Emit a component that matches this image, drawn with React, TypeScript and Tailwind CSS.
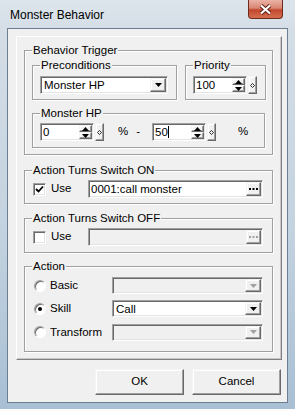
import type { ReactNode } from 'react';

const sunken =
  'border border-t-[#a0a0a0] border-l-[#a0a0a0] border-b-white border-r-white shadow-[inset_1px_1px_0_#696969,inset_-1px_-1px_0_#e3e3e3]';
const raised =
  'border border-t-[#f4f4f4] border-l-[#f4f4f4] border-b-[#696969] border-r-[#696969] shadow-[inset_-1px_-1px_0_#a0a0a0,inset_1px_1px_0_#ffffff] bg-[#f0f0f0]';

const Group = ({ label, className, children }: { label: string; className: string; children: ReactNode }) => (
  <fieldset className={`border border-[#a0a0a0] shadow-[inset_1px_1px_0_#fff,1px_1px_0_#fff] pl-[7px] ${className}`}>
    <legend className="px-[1px] bg-[#f0f0f0] leading-[14px]">{label}</legend>
    {children}
  </fieldset>
);

const Arrow = ({ up, color = '#000' }: { up?: boolean; color?: string }) => (
  <svg width="7" height="4" viewBox="0 0 7 4">
    <polygon points={up ? '0,4 7,4 3.5,0' : '0,0 7,0 3.5,4'} fill={color} />
  </svg>
);

const Combo = ({ value, className, disabled }: { value?: string; className: string; disabled?: boolean }) => (
  <div className={`flex ${sunken} ${disabled ? 'bg-[#f0f0f0]' : 'bg-white'} ${className}`}>
    <span className="flex-1 pl-[3px] leading-[14px] self-center">{value}</span>
    <div className={`w-[16px] m-[1px] flex items-center justify-center ${raised}`}>
      <Arrow color={disabled ? '#a0a0a0' : '#000'} />
    </div>
  </div>
);

const Spin = ({ value, caret }: { value: string; caret?: boolean }) => (
  <div className="flex h-[18px] w-[64px]">
    <div className={`flex-1 flex bg-white ${sunken}`}>
      <div className="flex-1 flex items-center pl-[2px] leading-[14px]">
        {value}
        {caret && <span className="w-px h-[12px] bg-black" />}
      </div>
      <div className="w-[13px] my-[1px] mr-[1px] flex flex-col">
        <div className={`flex-1 flex items-center justify-center ${raised}`}>
          <Arrow up />
        </div>
        <div className={`flex-1 flex items-center justify-center ${raised}`}>
          <Arrow />
        </div>
      </div>
    </div>
    <div className={`w-[9px] ml-[1px] flex items-center justify-center ${raised}`}>
      <svg width="5" height="5" viewBox="0 0 5 5">
        <polygon points="2.5,0.5 4.5,2.5 2.5,4.5 0.5,2.5" fill="none" stroke="#000" strokeWidth="0.8" />
      </svg>
    </div>
  </div>
);

const Check = ({ checked }: { checked?: boolean }) => (
  <div className={`w-[13px] h-[13px] bg-white flex items-center justify-center ${sunken}`}>
    {checked && (
      <svg width="9" height="9" viewBox="0 0 9 9">
        <path d="M1 4 L3.5 6.5 L8 1.5" fill="none" stroke="#000" strokeWidth="1.8" />
      </svg>
    )}
  </div>
);

const Radio = ({ checked }: { checked?: boolean }) => (
  <div className="w-[12px] h-[12px] rounded-full bg-white flex items-center justify-center border border-t-[#a0a0a0] border-l-[#a0a0a0] border-b-white border-r-white shadow-[inset_1px_1px_0_#696969]">
    {checked && <div className="w-[4px] h-[4px] rounded-full bg-black" />}
  </div>
);

const Dots = ({ color }: { color: string }) => (
  <svg width="9" height="3" viewBox="0 0 9 3">
    <rect x="0" y="0" width="2" height="2" fill={color} />
    <rect x="3.5" y="0" width="2" height="2" fill={color} />
    <rect x="7" y="0" width="2" height="2" fill={color} />
  </svg>
);

const PathField = ({ value, disabled }: { value?: string; disabled?: boolean }) => (
  <div className={`w-[175px] h-[18px] flex ${sunken} ${disabled ? 'bg-[#f0f0f0]' : 'bg-white'}`}>
    <span className="flex-1 pl-[2px] leading-[14px] self-center">{value}</span>
    <div className={`w-[15px] m-[1px] flex items-center justify-center ${raised}`}>
      <Dots color={disabled ? '#a0a0a0' : '#000'} />
    </div>
  </div>
);

const ACTIONS = [
  { label: 'Basic', value: '', checked: false, disabled: true },
  { label: 'Skill', value: 'Call', checked: true, disabled: false },
  { label: 'Transform', value: '', checked: false, disabled: true },
];

export default function App() {
  return (
    <div className="w-[295px] h-[409px] flex flex-col bg-[linear-gradient(180deg,#dde5ec_0%,#d4dde6_8%,#c4d3e0_55%,#a8bfd4_100%)] text-[11.5px] text-black font-['Liberation_Sans','Noto_Sans_CJK_JP',sans-serif]">
      <div className="h-[28px] flex items-start">
        <span className="pl-[10px] pt-[8px] text-[12px] leading-[14px]">Monster Behavior</span>
        <div className="ml-auto mr-[12px] w-[35px] h-[19px] rounded-b-[4px] border border-t-0 border-[#6e2a1c] bg-[linear-gradient(180deg,#eab3a6_0%,#d98672_45%,#c2462e_55%,#d4704f_100%)] flex items-center justify-center">
          <svg width="13" height="11" viewBox="0 0 13 11">
            <path d="M2 1.5 L11 9.5 M11 1.5 L2 9.5" stroke="#5a1a10" strokeWidth="4" />
            <path d="M2 1.5 L11 9.5 M11 1.5 L2 9.5" stroke="#fff" strokeWidth="2.2" />
          </svg>
        </div>
      </div>

      <div className="ml-[7px] w-[281px] h-[375px] border border-[#6b7e92] bg-[#f0f0f0] flex flex-col">
        <div className="ml-[8px] mt-[7px] w-[266px] pt-[6px] pb-[7px] pl-[7px] border border-t-white border-l-white border-b-[#808080] border-r-[#808080] shadow-[inset_-1px_-1px_0_#c8c8c8]">
          <Group label="Behavior Trigger" className="w-[249px] pb-[6px]">
            <div className="mt-[1px] flex gap-[8px]">
              <Group label="Preconditions" className="w-[145px] pt-[4px] pb-[5px]">
                <Combo value="Monster HP" className="w-[128px] h-[18px]" />
              </Group>
              <Group label="Priority" className="w-[81px] pt-[4px] pb-[5px]">
                <Spin value="100" />
              </Group>
            </div>
            <Group label="Monster HP" className="mt-[6px] w-[233px] pt-[3px] pb-[6px]">
              <div className="flex items-center">
                <Spin value="0" />
                <span className="ml-[14px]">%</span>
                <span className="ml-[8px]">-</span>
                <div className="ml-[12px]">
                  <Spin value="50" caret />
                </div>
                <span className="ml-[22px]">%</span>
              </div>
            </Group>
          </Group>

          <Group label="Action Turns Switch ON" className="mt-[8px] w-[249px] pt-[3px] pb-[5px]">
            <div className="flex items-center">
              <div className="ml-[1px]">
                <Check checked />
              </div>
              <span className="ml-[5px] w-[37px]">Use</span>
              <PathField value="0001:call monster" />
            </div>
          </Group>

          <Group label="Action Turns Switch OFF" className="mt-[7px] w-[249px] pt-[3px] pb-[6px]">
            <div className="flex items-center">
              <div className="ml-[1px]">
                <Check />
              </div>
              <span className="ml-[5px] w-[37px]">Use</span>
              <PathField disabled />
            </div>
          </Group>

          <Group label="Action" className="mt-[6px] w-[249px] pt-[4px] pb-[10px]">
            <div className="flex flex-col gap-[6px]">
              {ACTIONS.map((a) => (
                <div key={a.label} className="flex items-center">
                  <div className="ml-[2px]">
                    <Radio checked={a.checked} />
                  </div>
                  <span className="ml-[4px] w-[62px]">{a.label}</span>
                  <Combo value={a.value} disabled={a.disabled} className="w-[151px] h-[17px]" />
                </div>
              ))}
            </div>
          </Group>
        </div>

        <div className="mt-[9px] pr-[6px] flex justify-end gap-[8px]">
          {['OK', 'Cancel'].map((b) => (
            <div
              key={b}
              className={`w-[89px] h-[26px] flex items-center justify-center ${raised} ${b === 'OK' ? 'border-b-[#404040] border-r-[#404040]' : ''}`}
            >
              {b}
            </div>
          ))}
        </div>
      </div>
    </div>
  );
}
